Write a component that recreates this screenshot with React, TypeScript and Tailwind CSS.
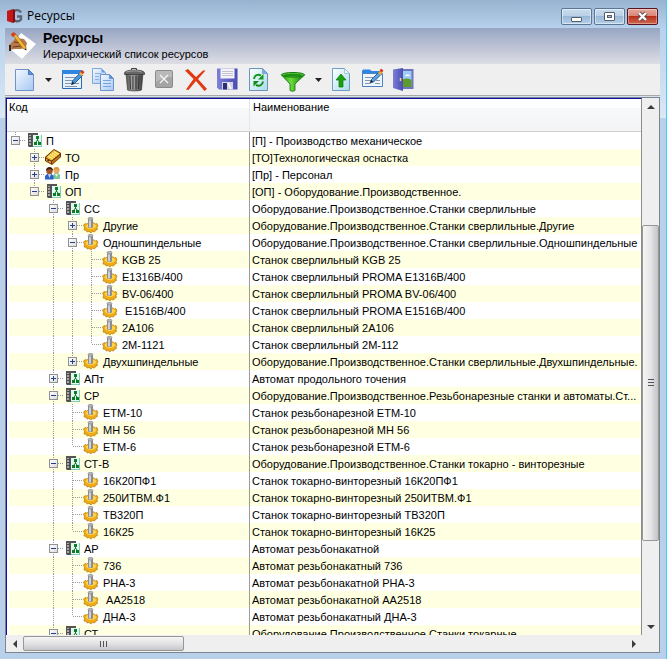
import { useState } from "react";
import type { ReactNode } from "react";
import clsx from "clsx";

type Kind = "group" | "tooling" | "people" | "machine";

type Resource = {
  code: string;
  name: string;
  kind: Kind;
  children?: Resource[];
};

const machine = (code: string, name: string): Resource => ({ code, name, kind: "machine" });

const resources: Resource[] = [
  {
    code: "П",
    name: "[П] - Производство механическое",
    kind: "group",
    children: [
      { code: "ТО", name: "[ТО]Технологическая оснастка", kind: "tooling", children: [] },
      { code: "Пр", name: "[Пр] - Персонал", kind: "people", children: [] },
      {
        code: "ОП",
        name: "[ОП] - Оборудование.Производственное.",
        kind: "group",
        children: [
          {
            code: "СС",
            name: "Оборудование.Производственное.Станки сверлильные",
            kind: "group",
            children: [
              { code: "Другие", name: "Оборудование.Производственное.Станки сверлильные.Другие", kind: "machine", children: [] },
              {
                code: "Одношпиндельные",
                name: "Оборудование.Производственное.Станки сверлильные.Одношпиндельные",
                kind: "machine",
                children: [
                  machine("KGB 25", "Станок сверлильный KGB 25"),
                  machine("Е1316В/400", "Станок сверлильный PROMA Е1316В/400"),
                  machine("BV-06/400", "Станок сверлильный PROMA BV-06/400"),
                  machine("\u00a0Е1516В/400", "Станок сверлильный PROMA Е1516В/400"),
                  machine("2А106", "Станок сверлильный 2А106"),
                  machine("2М-1121", "Станок сверлильный 2М-112"),
                ],
              },
              { code: "Двухшпиндельные", name: "Оборудование.Производственное.Станки сверлильные.Двухшпиндельные.", kind: "machine", children: [] },
            ],
          },
          { code: "АПт", name: "Автомат продольного точения", kind: "group", children: [] },
          {
            code: "СР",
            name: "Оборудование.Производственное.Резьбонарезные станки и автоматы.Ст...",
            kind: "group",
            children: [
              machine("ЕТМ-10", "Станок резьбонарезной ЕТМ-10"),
              machine("МН 56", "Станок резьбонарезной МН 56"),
              machine("ЕТМ-6", "Станок резьбонарезной ЕТМ-6"),
            ],
          },
          {
            code: "СТ-В",
            name: "Оборудование.Производственное.Станки токарно - винторезные",
            kind: "group",
            children: [
              machine("16К20ПФ1", "Станок токарно-винторезный 16К20ПФ1"),
              machine("250ИТВМ.Ф1", "Станок токарно-винторезный 250ИТВМ.Ф1"),
              machine("ТВ320П", "Станок токарно-винторезный ТВ320П"),
              machine("16К25", "Станок токарно-винторезный 16К25"),
            ],
          },
          {
            code: "АР",
            name: "Автомат резьбонакатной",
            kind: "group",
            children: [
              machine("736", "Автомат резьбонакатный 736"),
              machine("РНА-3", "Автомат резьбонакатной РНА-3"),
              machine("\u00a0АА2518", "Автомат резьбонакатной АА2518"),
              machine("ДНА-3", "Автомат резьбонакатный ДНА-3"),
            ],
          },
          { code: "СТ", name: "Оборудование.Производственное.Станки токарные", kind: "group", children: [] },
        ],
      },
    ],
  },
];

// trail[i] is true while the branch at depth i still has siblings below
type Row = { item: Resource; trail: boolean[]; open: boolean };

function flatten(items: Resource[], folded: Set<string>, trail: boolean[] = []): Row[] {
  return items.flatMap((item, i) => {
    const path = [...trail, i < items.length - 1];
    const open = Boolean(item.children) && !folded.has(item.code);
    const row: Row = { item, trail: path, open };
    return open && item.children ? [row, ...flatten(item.children, folded, path)] : [row];
  });
}

function GroupIcon() {
  return (
    <svg className="size-4" viewBox="0 0 16 16" aria-hidden="true">
      <path d="M0 1h10v2H5v12H1l-1-1z" fill="#555" />
      <path d="M1 3h2v11H1z" fill="#a9a9a9" />
      <path d="M1 4h3v1H1zM1 7h3v1H1zM1 10h3v1H1zM1 13h3v1H1z" fill="#4a4a4a" />
      <path d="M5 3h9v11H5z" fill="#e2f8f0" />
      <path d="M13 3h1v12H5v-1h8z" fill="#86c9b4" />
      <path d="M9.500 6v3M6.500 12L9.500 8l3 4" stroke="#147a2c" strokeWidth="1" fill="none" />
      <path d="M8 4h3v3H8zM6 10h3v3H6zM10 10h3v3h-3z" fill="#0b7d22" />
    </svg>
  );
}

function ToolingIcon() {
  return (
    <svg className="size-4 overflow-visible" viewBox="2 0 16 16" aria-hidden="true">
      <path d="M0 8L9 0l7 4v4L7 16l-7-4z" fill="#6b3204" />
      <path d="M1 8.500L9 1l6 3.500-8.500 7z" fill="#f4c534" />
      <path d="M1 9.500l5 3v2l-5-3z" fill="#eaa257" />
      <path d="M7 12.500L15 6v2l-8 7z" fill="#c47a17" />
      <path d="M3 7l5 3M5 5.500l5 3M7 4l5 3M9 2.500l5 3" stroke="#fff3ae" strokeWidth="1" />
      <path d="M2.500 11l1.500 1" stroke="#5a2400" strokeWidth="1.500" />
    </svg>
  );
}

function PeopleIcon() {
  return (
    <svg className="size-4 overflow-visible" viewBox="2 0 16 16" aria-hidden="true">
      <path d="M8 13V9l2-2h3l2 2v4z" fill="#7cc79a" />
      <path d="M10 8h3l-1.500 3z" fill="#e4f8ec" />
      <circle cx="11.500" cy="4.500" r="3" fill="#e9a765" />
      <path d="M8.500 4.500C8.500 1.500 10 1 11.500 1s3 .500 3 3.500c-1-1.500-4-2-6 0z" fill="#d99a2b" />
      <path d="M0 13.500V10l2-2h4.500l2 2v3.500z" fill="#2d63c4" />
      <path d="M3 8h3l-1.500 4z" fill="#cfe0ff" />
      <circle cx="4.500" cy="5" r="3.200" fill="#a05428" />
      <path d="M1 5c0-3 1.500-4 3.500-4S8 2 8 5C7 3 3 2.500 1 5z" fill="#3a1d10" />
    </svg>
  );
}

function MachineIcon() {
  return (
    <svg className="size-4 overflow-visible" viewBox="2 0 16 16" aria-hidden="true">
      <path
        d="M.5 8L2 6.500l1.500.500L6 5.500h4l2.500 1.500 1.500-.500L15 9l-1 1.500.500 2L13 13l-1.500 2-2-.500L8 16l-2-1.500-2 .500-.500-1.500-2.500-.500.500-2.500z"
        fill="#eeab16"
        stroke="#a87108"
        strokeWidth="0.600"
      />
      <path d="M2.500 9c1-2 3-2.500 5.500-2.500s4.500.500 5.500 2.500c-1 2-3 3-5.500 3S3.500 11 2.500 9z" fill="#ffd34a" />
      <path d="M5 2v8c0 1.300 5 1.300 5 0V2z" fill="#8b8d94" />
      <path d="M6 2v8.500h2V2z" fill="#cfd1d6" />
      <ellipse cx="7.500" cy="1.700" rx="2.500" ry="1.400" fill="#b4b6bc" stroke="#74767c" strokeWidth="0.500" />
    </svg>
  );
}

const kindIcon: Record<Kind, ReactNode> = {
  group: <GroupIcon />,
  tooling: <ToolingIcon />,
  people: <PeopleIcon />,
  machine: <MachineIcon />,
};

function TreeLines({ row, onToggle }: { row: Row; onToggle: () => void }) {
  const depth = row.trail.length - 1;
  return (
    <>
      {row.trail.slice(0, depth).map((more, i) => (
        <svg key={i} className="h-[17px] w-[19px] shrink-0" viewBox="0 0 19 17" aria-hidden="true">
          {more && <path d="M6.500 0v17" stroke="#9a9a9a" strokeDasharray="1 1" />}
        </svg>
      ))}
      <span className="relative h-[17px] w-[19px] shrink-0">
        <svg className="h-[17px] w-[19px]" viewBox="0 0 19 17" aria-hidden="true">
          <path
            d={row.trail[depth] ? "M6.500 0v17M7 8.500h9" : "M6.500 0v8M7 8.500h9"}
            stroke="#9a9a9a"
            strokeDasharray="1 1"
            fill="none"
          />
        </svg>
        {row.item.children && (
          <button
            type="button"
            aria-label={row.item.code}
            aria-expanded={row.open}
            onClick={onToggle}
            className="absolute left-0.5 top-1 flex size-[9px] items-center justify-center border border-[#919191] bg-gradient-to-br from-white to-[#dcdcdc]"
          >
            <svg className="size-[7px]" viewBox="0 0 7 7" aria-hidden="true">
              <path d={row.open ? "M1 3.500h5" : "M1 3.500h5M3.500 1v5"} stroke="#27408b" />
            </svg>
          </button>
        )}
      </span>
    </>
  );
}

function ResourceTable() {
  const [folded, setFolded] = useState(() => new Set(["ТО", "Пр", "Другие", "Двухшпиндельные", "АПт"]));

  const toggle = (code: string) =>
    setFolded((prev) => {
      const next = new Set(prev);
      if (!next.delete(code)) next.add(code);
      return next;
    });

  return (
    <table className="w-full table-fixed border-separate border-spacing-0 text-[11px] leading-4 text-black">
      <colgroup>
        <col className="w-[242px]" />
        <col />
      </colgroup>
      <thead>
        <tr className="h-[33px] bg-[linear-gradient(#ffffff_0,#ffffff_9px,#f7f8fa_9px,#f3f4f6_100%)] text-left align-top">
          <th className="border-b border-[#d0d0d0] p-0 pl-0.5 font-normal">Код</th>
          <th className="border-b border-l border-b-[#d0d0d0] border-l-[#e6e7ea] p-0 pl-[3px] font-normal">Наименование</th>
        </tr>
      </thead>
      <tbody>
        {flatten(resources, folded).map((row, i) => (
          <tr key={row.item.code} className={clsx("h-[17px]", i % 2 ? "bg-[#ffffe1]" : "bg-white")}>
            <td className="border-l-2 border-white p-0">
              <div className="flex h-[17px] overflow-hidden whitespace-nowrap">
                <TreeLines row={row} onToggle={() => toggle(row.item.code)} />
                <span className="mr-0.5 w-4 shrink-0">{kindIcon[row.item.kind]}</span>
                <span className="pt-px">{row.item.code}</span>
              </div>
            </td>
            <td className="truncate border-l border-[#9c9c9c] p-0 pl-0.5 pt-px">{row.item.name}</td>
          </tr>
        ))}
      </tbody>
    </table>
  );
}

function ScrollArrow({ label, d }: { label: string; d: string }) {
  return (
    <button type="button" aria-label={label} className="flex size-[17px] shrink-0 items-center justify-center">
      <svg className="size-2" viewBox="0 0 8 8" aria-hidden="true">
        <path d={d} fill="#3c3c3c" />
      </svg>
    </button>
  );
}

function VerticalScroll() {
  return (
    <div className="flex w-[17px] shrink-0 flex-col bg-[#efefef]">
      <ScrollArrow label="Вверх" d="M0 6l4-4 4 4z" />
      <div className="flex-110" />
      <div className="flex flex-316 flex-col items-center justify-center gap-0.5 rounded-xs border border-[#979797] bg-gradient-to-r from-[#f5f5f5] via-[#e6e6e8] to-[#c2c3c7]">
        <span className="h-px w-1.5 bg-[#555]" />
        <span className="h-px w-1.5 bg-[#555]" />
        <span className="h-px w-1.5 bg-[#555]" />
      </div>
      <div className="flex-77" />
      <ScrollArrow label="Вниз" d="M0 2l4 4 4-4z" />
    </div>
  );
}

function HorizontalScroll() {
  return (
    <div className="flex h-[17px] shrink-0 bg-[#efefef] pr-[17px]">
      <ScrollArrow label="Влево" d="M6 0L2 4l4 4z" />
      <div className="my-px flex flex-160 items-center justify-center gap-0.5 rounded-xs border border-[#979797] bg-gradient-to-b from-[#f5f5f5] via-[#e3e3e5] to-[#c6c7cb]">
        <span className="h-1.5 w-px bg-[#555]" />
        <span className="h-1.5 w-px bg-[#555]" />
        <span className="h-1.5 w-px bg-[#555]" />
      </div>
      <div className="flex-442" />
      <ScrollArrow label="Вправо" d="M2 0l4 4-4 4z" />
    </div>
  );
}

function ToolButton({ label, wide, children }: { label: string; wide?: boolean; children: ReactNode }) {
  return (
    <button type="button" aria-label={label} title={label} className="shrink-0">
      <svg className={clsx("h-6", wide ? "w-7" : "w-6")} viewBox={wide ? "0 0 28 24" : "0 0 24 24"} fill="none" aria-hidden="true">
        {children}
      </svg>
    </button>
  );
}

function DropArrow({ label }: { label: string }) {
  return (
    <button type="button" aria-label={label} className="flex w-[11px] shrink-0 items-center justify-center">
      <svg className="h-1 w-[7px]" viewBox="0 0 7 4" aria-hidden="true">
        <path d="M0 0h7L3.500 4z" fill="#222" />
      </svg>
    </button>
  );
}

function Toolbar() {
  return (
    <div className="flex h-8 shrink-0 items-stretch gap-[7px] overflow-hidden border-b border-[#a8a8a8] bg-[#efefef] px-[7px] py-1">
      <svg width="0" height="0" className="absolute" aria-hidden="true">
        <defs>
          <linearGradient id="paper" x1="0" y1="0" x2="1" y2="1">
            <stop offset="0" stopColor="#f4f9ff" />
            <stop offset="1" stopColor="#a5c8f2" />
          </linearGradient>
          <linearGradient id="mint" x1="0" y1="0" x2="1" y2="1">
            <stop offset="0" stopColor="#ffffff" />
            <stop offset="1" stopColor="#a9dce8" />
          </linearGradient>
          <linearGradient id="metal" x1="0" y1="0" x2="1" y2="0">
            <stop offset="0" stopColor="#555" />
            <stop offset="0.400" stopColor="#999" />
            <stop offset="1" stopColor="#3a3a3a" />
          </linearGradient>
          <linearGradient id="lime" x1="0" y1="0" x2="1" y2="0">
            <stop offset="0" stopColor="#1f9a12" />
            <stop offset="0.400" stopColor="#6ddc3a" />
            <stop offset="1" stopColor="#0c7a0a" />
          </linearGradient>
          <linearGradient id="disk" x1="0" y1="0" x2="1" y2="0">
            <stop offset="0" stopColor="#7d7fd8" />
            <stop offset="1" stopColor="#4a4cb0" />
          </linearGradient>
        </defs>
      </svg>
      <ToolButton label="Создать">
        <path d="M3.500 1.500h13l5 5v16h-18z" fill="url(#paper)" stroke="#6f93c9" />
        <path d="M16.500 1.500v5h5z" fill="#5f92d8" stroke="#4c7cc0" />
      </ToolButton>
      <DropArrow label="Варианты создания" />
      <ToolButton label="Изменить">
        <path d="M1.500 3.500h19v17h-19z" fill="#e6f1fc" stroke="#2b6ab8" />
        <path d="M1 2h20v4H1z" fill="#2f86e0" />
        <path d="M4 9.500h11M4 12.500h8M4 15.500h6M14 15.500h4M4 18.500h12" stroke="#8296ad" />
        <path d="M10.500 16.500l1-3.500L19 5l2.500 2.500-8 8z" fill="#3f9be8" stroke="#1d3f6b" strokeWidth="0.800" />
        <path d="M10.500 16.500l1-3 2 2z" fill="#222" />
        <path d="M18 6l2-2.500 2.500 2L20.500 8z" fill="#f2a93b" />
        <path d="M19.500 4L21 2l2.500 2L22 6z" fill="#d63a1e" />
      </ToolButton>
      <ToolButton label="Копировать">
        <path d="M.5.5h9l4 4v11H.5z" fill="url(#paper)" stroke="#7ea6dc" />
        <path d="M9.500.5v4h4z" fill="#6f9fe0" />
        <path d="M3 5.500h6M3 8.500h4M3 11.500h4" stroke="#8fb2e2" />
        <path d="M8.500 6.500h9l4 4v12h-13z" fill="url(#paper)" stroke="#6a92cf" />
        <path d="M17.500 6.500v4h4z" fill="#5a8dd6" stroke="#4c7cc0" strokeWidth="0.500" />
        <path d="M11 12.500h8M11 15.500h8M11 18.500h8" stroke="#7da5dd" />
      </ToolButton>
      <ToolButton label="Удалить">
        <path d="M3 5h17l-1.500 17c-3 1.300-11 1.300-14 0z" fill="url(#metal)" stroke="#333" strokeWidth="0.600" />
        <path d="M7 8l.500 13M10 8v13.500M13 8v13.500M16 8l-.500 13" stroke="#333" />
        <path d="M8.200 8l.300 13M11.200 8v13" stroke="#b5b5b5" strokeWidth="0.600" />
        <path d="M1.500 5c0-4 20-4 20 0v1.500h-20z" fill="#666" stroke="#333" strokeWidth="0.700" />
        <path d="M3.500 4c4-1.500 12-1.500 15 0" stroke="#aaa" />
        <path d="M8.500 2V.500h5V2" stroke="#444" />
      </ToolButton>
      <ToolButton label="Снять выделение">
        <rect x="1.500" y="2.500" width="17" height="17" rx="1" fill="#a4a4a4" stroke="#8b8b8b" />
        <path d="M2 3h16v6C12 9 7 11 2 14z" fill="#b9b9b9" />
        <path d="M6 7l8 8M14 7l-8 8" stroke="#f4f4f4" strokeWidth="1.300" />
      </ToolButton>
      <ToolButton label="Отменить">
        <path d="M0 2.500L3 1l8 8 7-6.500 2.500 0L13 11l9 10-2.500 2L11 13 3.500 22 1 21.500 8.500 11z" fill="#e03a12" />
      </ToolButton>
      <ToolButton label="Сохранить">
        <path d="M1 .5h20.500v21H3L1 19.500z" fill="url(#disk)" />
        <path d="M4.500 .5h14v10h-14z" fill="#f4f4f8" />
        <path d="M6 3.500h11M6 5.500h11M6 7.500h11" stroke="#c3c4d4" />
        <path d="M6 14h11v7.500H6z" fill="#d3d4e6" />
        <path d="M7 15h4v6.500H7z" fill="#2c2e6e" />
        <path d="M12 15l3 6" stroke="#fff" strokeWidth="1.500" />
      </ToolButton>
      <ToolButton label="Обновить">
        <path d="M2.500 .5h13l5 5v17h-18z" fill="url(#mint)" stroke="#6b93bf" />
        <path d="M15.500 .5v5h5z" fill="#7fb0e4" stroke="#5c8cc4" strokeWidth="0.600" />
        <path d="M7 11c.5-4 4-5 7-3.500" stroke="#129a1c" strokeWidth="2" />
        <path d="M16.500 6v5.500H11z" fill="#129a1c" />
        <path d="M16 13.500c-.5 4-4 5-7 3.500" stroke="#0e8a18" strokeWidth="2" />
        <path d="M6.500 18.500V13H12z" fill="#0e8a18" />
      </ToolButton>
      <ToolButton label="Фильтр" wide>
        <path d="M3.500 7l8.500 9v6.500c2 1 3 1 5 0V16l9.500-9z" fill="url(#lime)" stroke="#0f6d0c" strokeWidth="0.800" />
        <ellipse cx="15" cy="6.800" rx="11.500" ry="2.300" fill="#5cc73c" stroke="#127a0e" />
        <ellipse cx="15" cy="7.200" rx="9.500" ry="1.400" fill="#1d8f14" />
      </ToolButton>
      <DropArrow label="Варианты фильтра" />
      <ToolButton label="Выгрузить">
        <path d="M1.500 .5h12l5 5v17h-17z" fill="url(#mint)" stroke="#6b9ec4" />
        <path d="M13.500 .5v5h5z" fill="#e8f4ff" stroke="#8fb8dc" strokeWidth="0.700" />
        <path d="M10 6l5 6h-3v7H8v-7H5z" fill="#17a012" stroke="#0b7a08" strokeWidth="0.700" />
      </ToolButton>
      <ToolButton label="Свойства">
        <path d="M0 3l1-1.500h7L9.500 3H20v4H0z" fill="#2f86e0" />
        <path d="M.5 5.500h20v13H.5z" fill="#eef5fd" stroke="#4a82c4" />
        <path d="M3 9.500h8M3 12.500h6M3 15.500h5M14 12.500h4M13 15.500h5" stroke="#8296ad" />
        <path d="M8 15l1.500-3.500L17 4l2.500 2-8 8z" fill="#5aa5ea" stroke="#1d3f6b" strokeWidth="0.800" />
        <path d="M8 15l1.500-3 1.500 1.500z" fill="#222" />
        <path d="M16 5l2-2.500 2.500 2-2 2.500z" fill="#f2a93b" />
        <path d="M17.500 3L19 .5l2.500 2L20 4.500z" fill="#d63a1e" />
      </ToolButton>
      <ToolButton label="Выход">
        <path d="M5 1h15.500v20H5z" fill="#6e73c2" />
        <path d="M8 3h10.500v16H8z" fill="#9ccbf5" />
        <path d="M8 13c3-3 7-3 10.500-1v7H8z" fill="#5f9a2c" />
        <path d="M12 8c1-2 4-2 5 0z" fill="#fff" />
        <path d="M0 1.500L10 0v23L0 20z" fill="url(#disk)" />
        <path d="M7.500 10v3" stroke="#f3d67a" strokeWidth="1.500" />
      </ToolButton>
    </div>
  );
}

function TitleBar() {
  return (
    <div className="flex h-7 shrink-0 items-center justify-between px-0.5 pt-1">
      <div className="flex items-center gap-1 font-['Open_Sans','Noto_Sans',sans-serif] text-[12px] text-black">
        <svg className="size-4" viewBox="0 0 16 16" aria-hidden="true">
          <path d="M14 4.500C12 1 6 1 5.500 7S11 15 14 11.500V8.500h-4" fill="none" stroke="#5d6570" strokeWidth="2.400" />
          <path d="M0 3l6-2v14l-6-2z" fill="#c4161c" />
          <path d="M6 1l2 1v12l-2 1z" fill="#7d0e12" />
        </svg>
        <span>Ресурсы</span>
      </div>
      <div className="flex gap-0.5">
        <button
          type="button"
          aria-label="Свернуть"
          className="flex h-[17px] w-[31px] items-center justify-center rounded-xs border border-[#5a7796] bg-[linear-gradient(#c9dcef_0,#b9cfe6_50%,#9ab8d6_50%,#b4d0ea_100%)] shadow-[inset_0_0_0_1px_rgba(255,255,255,0.5)]"
        >
          <svg className="h-[11px] w-[13px]" viewBox="0 0 13 11" aria-hidden="true">
            <rect x="1.500" y="6.500" width="10" height="4" rx="0.500" fill="#fff" stroke="#555e68" />
          </svg>
        </button>
        <button
          type="button"
          aria-label="Развернуть"
          className="flex h-[17px] w-[31px] items-center justify-center rounded-xs border border-[#5a7796] bg-[linear-gradient(#c9dcef_0,#b9cfe6_50%,#9ab8d6_50%,#b4d0ea_100%)] shadow-[inset_0_0_0_1px_rgba(255,255,255,0.5)]"
        >
          <svg className="h-[11px] w-[13px]" viewBox="0 0 13 11" aria-hidden="true">
            <rect x="1.500" y="1.500" width="10" height="8" rx="0.500" fill="#fff" stroke="#555e68" />
            <rect x="4.500" y="4.500" width="4" height="2" fill="#a9c3de" stroke="#555e68" />
          </svg>
        </button>
        <button
          type="button"
          aria-label="Закрыть"
          className="flex h-[17px] w-[31px] items-center justify-center rounded-xs border border-[#5b1420] bg-[linear-gradient(#e6a99d_0,#d98374_50%,#b8301b_50%,#d0694f_100%)] shadow-[inset_0_0_0_1px_rgba(255,255,255,0.35)]"
        >
          <svg className="h-[11px] w-[13px]" viewBox="0 0 13 11" aria-hidden="true">
            <path d="M3 2l7 7M10 2L3 9" stroke="#5b4a50" strokeWidth="4.200" />
            <path d="M3 2l7 7M10 2L3 9" stroke="#fff" strokeWidth="2.400" />
          </svg>
        </button>
      </div>
    </div>
  );
}

function Banner() {
  return (
    <header className="flex h-9 shrink-0 gap-[7px] bg-gradient-to-b from-[#98a6c3] to-[#dddde4] pl-[3px] text-black">
      <svg className="mt-1 size-7" viewBox="0 0 28 28" aria-hidden="true">
        <path d="M13 1l15 11-14 15L2 17z" fill="#fff" />
        <path d="M1 13l7-7 8 1 3 4-1 4-5 2H7l-6 1z" fill="#b5794c" />
        <path d="M1 13h2v6H1z" fill="#2a2a2a" />
        <path d="M6 10l7 1 3 3M5 15l8-1" stroke="#6e3a18" strokeWidth="1.200" fill="none" />
        <path d="M4 2l3-1 11 14 0 2.500-3-1z" fill="#f2b632" stroke="#8a5a10" strokeWidth="0.600" />
        <path d="M2.500 2.500l3-2.500L8 2.500 5 5z" fill="#d4402a" />
        <path d="M18.500 18.500l-2-1 1.500-1z" fill="#111" />
      </svg>
      <div>
        <h1 className="text-[14px] font-bold leading-5">Ресурсы</h1>
        <p className="text-[11px] leading-3">Иерархический список ресурсов</p>
      </div>
    </header>
  );
}

export default function App() {
  return (
    <main className="flex h-screen flex-col overflow-hidden border-r border-[#3fd0f5] bg-[linear-gradient(#98b3cf_0,#b6d1ec_28px,#dbe8f5_118px,#b9d0ea_118px,#b9d0ea_100%)] pb-1.5 pl-[5px] pr-1.5 font-['Liberation_Sans',Arial,sans-serif]">
      <TitleBar />
      <Banner />
      <Toolbar />
      <section className="mt-px flex min-h-0 flex-1 flex-col border border-[#7f858e] bg-[#efefef]">
        <div className="flex min-h-0 flex-1">
          <div className="min-w-0 flex-1 overflow-hidden border-l border-r border-t border-l-[#1010a0] border-r-[#8c8c8c] border-t-[#1010a0] bg-white">
            <ResourceTable />
          </div>
          <VerticalScroll />
        </div>
        <HorizontalScroll />
      </section>
    </main>
  );
}
